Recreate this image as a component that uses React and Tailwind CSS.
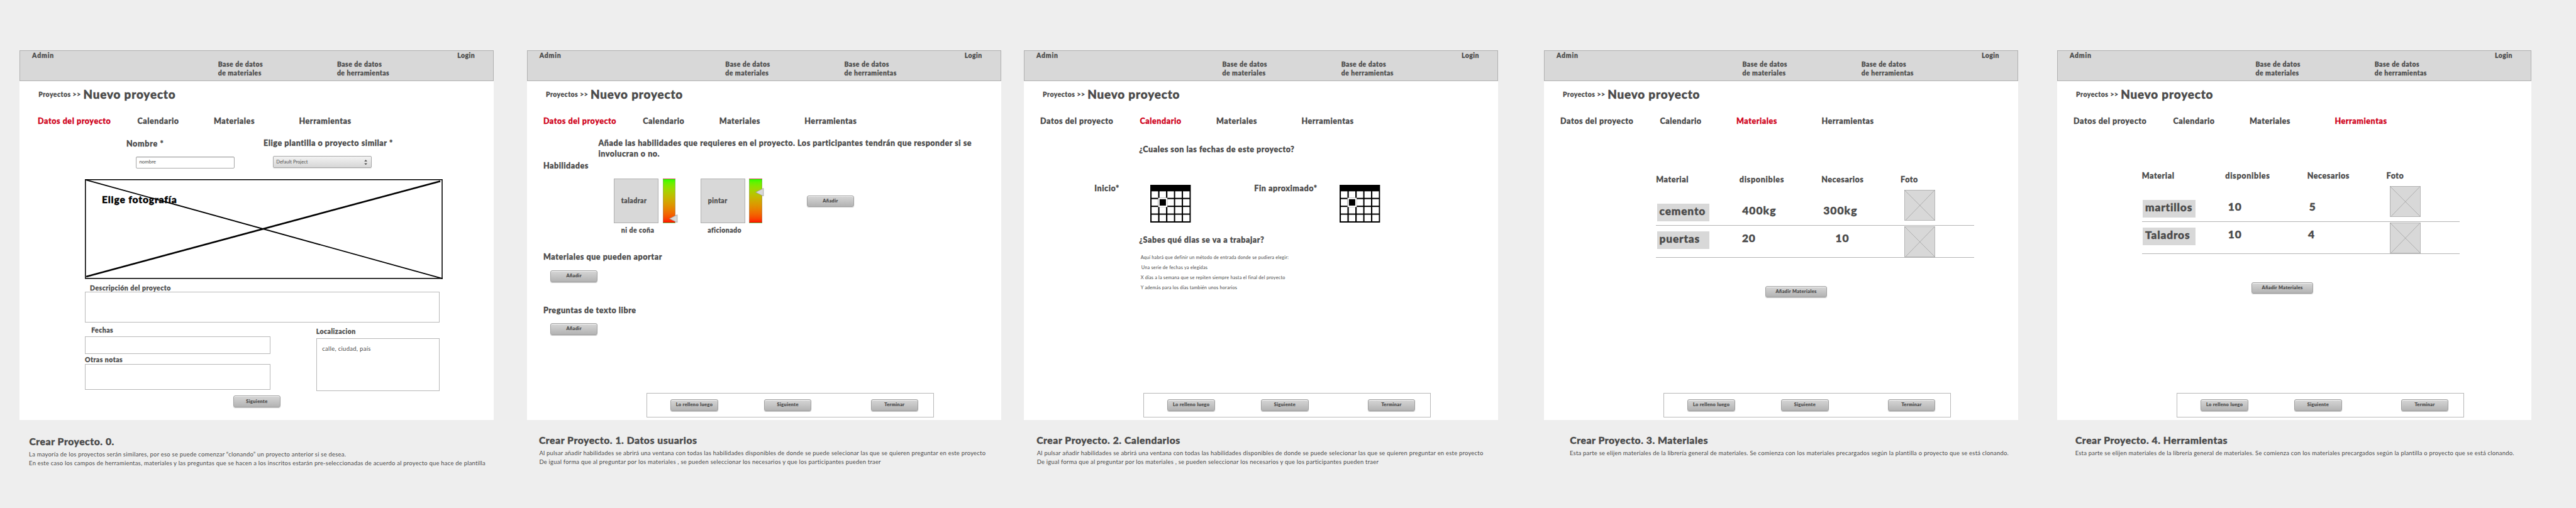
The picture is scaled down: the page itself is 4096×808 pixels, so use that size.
import React from "react";
import clsx from "clsx";

const heavy = "font-black [-webkit-text-stroke:0.026em_currentColor]";
const small = clsx(heavy, "text-[10.47px] leading-[14px] tracking-[0.048em]");
const medium = clsx(heavy, "text-[12.57px] leading-[16px] tracking-[0.044em]");
const big = clsx(heavy, "text-[17.3px] leading-[22px] tracking-[0.05em]");
const note = "text-[9.42px] tracking-[0.026em]";

function Button({ children, className = "w-[75.6px]" }) {
  return (
    <button
      className={clsx(
        heavy,
        "flex h-[18.8px] shrink-0 items-center justify-center rounded-[3px] border border-[#a0a0a0] bg-linear-to-b from-[#d6d6d6] to-[#b3b3b3] pb-px text-[7.33px] leading-none tracking-[0.056em] shadow-[0_1px_1px_rgba(0,0,0,0.22),inset_0_1px_0_rgba(255,255,255,0.7)]",
        className,
      )}
    >
      {children}
    </button>
  );
}

function Header() {
  return (
    <header
      className={clsx(
        "grid h-[49px] shrink-0 grid-cols-[314.4px_189.2px_191.3px_auto] border border-[#b0b0b0] bg-[#d8d8d8]",
        small,
      )}
    >
      <span className="pt-[0.7px] pl-[18.8px] tracking-[0.08em]">Admin</span>
      <span className="pt-[14.3px]">
        Base de datos
        <br />
        de materiales
      </span>
      <span className="pt-[14.3px]">
        Base de datos
        <br />
        de herramientas
      </span>
      <span className="pt-[0.7px]">Login</span>
    </header>
  );
}

const TABS = ["Datos del proyecto", "Calendario", "Materiales", "Herramientas"];

function Tabs({ active, className }) {
  return (
    <nav className={clsx("grid shrink-0 grid-cols-[158.4px_121.5px_135.5px_auto]", medium, className)}>
      {TABS.map((tab, i) => (
        <span key={tab} className={i === active ? "text-[#d0021b]" : undefined}>
          {tab}
        </span>
      ))}
    </nav>
  );
}

function Artboard({ className, active, tabsClass = "pl-[26px]", footer = true, caption, children }) {
  return (
    <section className={clsx("flex w-[754px] shrink-0 flex-col", className)}>
      <div className="flex h-[588.6px] shrink-0 flex-col bg-white">
        <Header />
        <div className="flex h-[56.5px] shrink-0 items-start pl-[30px]">
          <span className={clsx("mt-[14.6px] w-[71.1px]", small)}>Proyectos &gt;&gt;</span>
          <h1 className={clsx("mt-[9.2px] text-[18.85px] leading-[24px] tracking-[0.046em]", heavy)}>Nuevo proyecto</h1>
        </div>
        <Tabs active={active} className={tabsClass} />
        {children}
        {footer && (
          <div className="mt-auto mb-[4.7px] ml-[190.3px] flex h-[38.6px] w-[456.6px] shrink-0 items-start border border-[#b8b8b8] pt-[8.8px] pl-[37px]">
            <Button>Lo relleno luego</Button>
            <Button className="ml-[73.1px] w-[75.6px]">Siguiente</Button>
            <Button className="ml-[94.1px] w-[75.6px]">Terminar</Button>
          </div>
        )}
      </div>
      {caption}
    </section>
  );
}

function Caption({ title, lines, className = "mt-[22.3px]", titleClass, textClass }) {
  return (
    <div className={className}>
      <h2 className={clsx("text-[15.7px] leading-[20px] tracking-[0.036em]", heavy, titleClass)}>{title}</h2>
      <div className={clsx("mt-[3.8px] leading-[13.7px]", note, textClass)}>
        {lines.map((line) => (
          <p key={line}>{line}</p>
        ))}
      </div>
    </div>
  );
}

function Box({ className, children }) {
  return <div className={clsx("shrink-0 border border-[#b8b8b8]", className)}>{children}</div>;
}

function ProjectForm() {
  return (
    <div className="flex flex-col">
      <div className="grid h-[84.4px] shrink-0 grid-cols-[218.1px_auto] pl-[169.6px]">
        <div className="pt-[19.6px]">
          <div className={clsx(medium, "tracking-[0.055em]")}>Nombre *</div>
          <div className="mt-[12.1px] ml-[14.9px] flex h-[18.8px] w-[157.3px] items-center rounded-[2px] border border-[#a8a8a8] pl-[4.6px] text-[7.9px] leading-none shadow-[inset_0_1px_1px_rgba(0,0,0,0.15)]">
            nombre
          </div>
        </div>
        <div className="pt-[19.2px]">
          <div className={medium}>Elige plantilla o proyecto similar *</div>
          <div className="mt-[12px] ml-[14.9px] flex h-[18.9px] w-[157.3px] items-center justify-between rounded-[2px] border border-[#a8a8a8] bg-linear-to-b from-[#f3f3f3] to-[#d6d6d6] pr-[6px] pl-[4.4px] text-[7.33px] leading-none tracking-[0.015em] shadow-[0_1px_1px_rgba(0,0,0,0.15)]">
            Default Project
            <svg viewBox="0 0 10 16" className="h-[8.4px] w-[5.2px]" fill="#4a4a4a">
              <path d="M5 0 L9.6 5.2 H0.4 Z M5 16 L9.6 10.8 H0.4 Z" />
            </svg>
          </div>
        </div>
      </div>
      <div className="relative ml-[103.7px] h-[158.6px] w-[568.8px] shrink-0 text-black">
        <svg viewBox="0 0 1086 303" preserveAspectRatio="none" className="absolute inset-0 h-full w-full" fill="none" stroke="#000">
          <rect x="1.5" y="1.5" width="1083" height="300" strokeWidth="3" />
          <path d="M3 2 L1086 302" strokeWidth="3.6" />
          <path d="M4 296 L1079 6" strokeWidth="5" />
        </svg>
        <div className={clsx("relative pt-[21.1px] pl-[27px] text-[15.7px] leading-[20px] tracking-[0.052em]", heavy)}>
          Elige fotografía
        </div>
      </div>
      <div className={clsx("mt-[6.6px] pl-[111.8px]", small)}>Descripción del proyecto</div>
      <Box className="-mt-[1.1px] ml-[103.7px] h-[49.5px] w-[563.6px]" />
      <div className="ml-[103.7px] flex items-start">
        <div className="flex w-[295.4px] flex-col">
          <span className={clsx("mt-[5.2px] pl-[10.2px]", small)}>Fechas</span>
          <Box className="mt-[2.4px] h-[28.3px]" />
          <span className={clsx("mt-[1.8px]", small)}>Otras notas</span>
          <Box className="h-[40.9px]" />
        </div>
        <div className="ml-[72.3px] flex w-[196px] flex-col">
          <span className={clsx("mt-[7.3px]", small)}>Localizacion</span>
          <Box className="mt-[3.4px] h-[84.2px] pt-[10.7px] pl-[8.6px]">
            <p className="text-[9.42px] leading-[12px] tracking-[0.035em]">calle, ciudad, país</p>
          </Box>
        </div>
      </div>
      <Button className="mt-[7.5px] ml-[339.6px] w-[75px]">Siguiente</Button>
    </div>
  );
}

function Skill({ name, level, markerClass, nameClass }) {
  return (
    <div className="w-[137.4px]">
      <div className="flex">
        <div
          className={clsx(
            "h-[70.7px] w-[71px] border border-[#b0b0b0] bg-[#d8d8d8] pt-[27px] tracking-[0.05em]",
            nameClass,
          )}
        >
          {name}
        </div>
        <div className="relative ml-[6.7px] w-[20.5px] border border-[#979797]/50 bg-linear-to-b from-[#14ff00] to-[#ff0000]">
          <svg viewBox="0 0 26 26" className={clsx("absolute h-[13.6px] w-[13.4px]", markerClass)}>
            <path d="M1 13 L25 1 V25 Z" fill="#d8d8d8" stroke="#979797" strokeWidth="1.4" />
          </svg>
        </div>
      </div>
      <p className="mt-[4.4px] pl-[11.6px]">{level}</p>
    </div>
  );
}

function UserData() {
  return (
    <div className="flex flex-col">
      <p className={clsx("mt-[18px] pl-[113.6px] text-[12.57px] leading-[17px] tracking-[0.042em]", heavy)}>
        Añade las habilidades que requieres en el proyecto. Los participantes tendrán que responder si se
        <br />
        involucran o no.
      </p>
      <div className={clsx("mt-[2.8px] pl-[26px]", medium)}>Habilidades</div>
      <div className={clsx("mt-[12.3px] flex pl-[138.3px]", small)}>
        <Skill name="taladrar" level="ni de coña" nameClass="pl-[10.6px]" markerClass="top-[55.5px] left-[9.3px]" />
        <Skill name="pintar" level="aficionado" nameClass="pl-[11.2px]" markerClass="top-[13.6px] left-[9px]" />
        <Button className="mt-[26.4px] ml-[31.7px] w-[75.6px]">Añadir</Button>
      </div>
      <div className={clsx("mt-[27.9px] pl-[26px]", medium)}>Materiales que pueden aportar</div>
      <Button className="mt-[12.7px] ml-[37px] w-[75.6px]">Añadir</Button>
      <div className={clsx("mt-[37.1px] pl-[26px]", medium)}>Preguntas de texto libre</div>
      <Button className="mt-[12px] ml-[37px] w-[75.6px]">Añadir</Button>
    </div>
  );
}

const COLS = [4, 28, 52, 75.7, 99.5];
const ROWS = [19.7, 43.5, 67.3, 91];

function CalendarIcon() {
  return (
    <svg viewBox="0 0 123 114.7" className="mt-[2.3px] h-[60px] w-[64.4px]">
      <rect width="123" height="114.7" fill="#000" />
      {ROWS.map((y) => COLS.map((x) => <rect key={x + "-" + y} x={x} y={y} width="19.8" height="19.8" fill="#fff" />))}
      <rect x="24" y="39.5" width="28" height="28" fill="#fff" />
      <rect x="28.2" y="43.7" width="19.4" height="19.4" fill="#000" />
    </svg>
  );
}

function Dates() {
  return (
    <div className="flex flex-col">
      <div className={clsx("mt-[28.8px] pl-[183.2px]", medium)}>¿Cuales son las fechas de este proyecto?</div>
      <div className={clsx("mt-[46.2px] grid grid-cols-[89.1px_164.9px_136.2px_auto] pl-[112.2px]", medium)}>
        <span>Inicio*</span>
        <CalendarIcon />
        <span>Fin aproximado*</span>
        <CalendarIcon />
      </div>
      <div className={clsx("mt-[19.4px] pl-[183.2px]", medium)}>¿Sabes qué dias se va a trabajar?</div>
      <div className="mt-[12.7px] pl-[185.6px] text-[7.33px] leading-[15.7px] tracking-[0.025em]">
        <p>Aquí habrá que definir un método de entrada donde se pudiera elegir:</p>
        <p className="pl-[1.2px]">Una serie de fechas ya elegidas</p>
        <p>X días a la semana que se repiten siempre hasta el final del proyecto</p>
        <p>Y además para los días también unos horarios</p>
      </div>
    </div>
  );
}

function Photo({ className }) {
  return (
    <svg viewBox="0 0 94 94" className={clsx("h-[49.2px] w-[49.2px]", className)} fill="none" stroke="#979797" strokeWidth="1.2">
      <rect x="0.6" y="0.6" width="92" height="92" fill="#d8d8d8" />
      <path d="M1 1 L94 94 M4 92 L92 1" />
    </svg>
  );
}

const ROW_GRID = "grid shrink-0 grid-cols-[132.5px_130.4px_125.9px_auto] items-start";

function Inventory({ className, rows, buttonClass }) {
  return (
    <div className={clsx("flex flex-col", className)}>
      <div className="flex w-[505.5px] flex-col">
        <div className={clsx(ROW_GRID, medium)}>
          <span>Material</span>
          <span className="tracking-[0.056em]">disponibles</span>
          <span>Necesarios</span>
          <span>Foto</span>
        </div>
        {rows.map((row, i) => (
          <div
            key={row.name}
            className={clsx(ROW_GRID, big, "border-b border-[#b4b4b4]", i === 0 ? "h-[64.7px] pt-[29.2px]" : "h-[50.5px] pt-[9.2px]")}
          >
            <span className="ml-[1.5px] h-[28px] w-[83.3px] bg-[#d8d8d8] pt-[1.1px] pl-[3.8px]">{row.name}</span>
            <span className={row.availableClass}>{row.available}</span>
            <span className={row.neededClass}>{row.needed}</span>
            <Photo className={i === 0 ? "-mt-[22px] ml-[5.6px]" : "-mt-[8.8px] ml-[5.6px]"} />
          </div>
        ))}
      </div>
      <Button className={clsx("mt-[44.9px] w-[97.5px]", buttonClass)}>Añadir Materiales</Button>
    </div>
  );
}

const MATERIALS = [
  { name: "cemento", available: "400kg", needed: "300kg", availableClass: "pl-[4.4px] tracking-[0.065em]", neededClass: "pt-[0.6px] pl-[3px] tracking-[0.065em]" },
  { name: "puertas", available: "20", needed: "10", availableClass: "pl-[4.2px]", neededClass: "pl-[22.4px]" },
];

const TOOLS = [
  { name: "martillos", available: "10", needed: "5", availableClass: "pl-[4.6px]", neededClass: "pt-[0.6px] pl-[3.2px]" },
  { name: "Taladros", available: "10", needed: "4", availableClass: "pl-[4.6px]", neededClass: "pl-[1.4px]" },
];

const USER_NOTES = [
  "Al pulsar añadir habilidades se abrirá una ventana con todas las habilidades disponibles de donde se puede selecionar las que se quieren preguntar en este proyecto",
  "De igual forma que al preguntar por los materiales , se pueden seleccionar los necesarios y que los participantes pueden traer",
];

const INVENTORY_NOTES = [
  "Esta parte se elijen materiales de la librería general de materiales. Se comienza con los materiales precargados según la plantilla o proyecto que se está clonando.",
];

export default function App() {
  return (
    <main className="flex h-[808px] w-[4096px] items-start overflow-hidden bg-[#eeeeee] pt-[79.6px] font-[Lato,sans-serif] whitespace-nowrap text-[#4a4a4a]">
      <Artboard
        className="ml-[31.3px]"
        active={0}
        tabsClass="pl-[28.8px]"
        footer={false}
        caption={
          <Caption
            className="mt-[23.9px]"
            titleClass="pl-[15.1px]"
            textClass="pl-[14.8px]"
            title="Crear Proyecto. 0."
            lines={[
              "La mayoría de los proyectos serán similares, por eso se puede comenzar “clonando” un proyecto anterior si se desea.",
              "En este caso los campos de herramientas, materiales y las preguntas que se hacen a los inscritos estarán pre-seleccionadas de acuerdo al proyecto que hace de plantilla",
            ]}
          />
        }
      >
        <ProjectForm />
      </Artboard>
      <Artboard
        className="ml-[52.6px]"
        active={0}
        caption={<Caption titleClass="pl-[19px]" textClass="pl-[19.5px]" title="Crear Proyecto. 1. Datos usuarios" lines={USER_NOTES} />}
      >
        <UserData />
      </Artboard>
      <Artboard
        className="ml-[36.2px]"
        active={1}
        caption={<Caption titleClass="pl-[20.1px]" textClass="pl-[20.6px]" title="Crear Proyecto. 2. Calendarios" lines={USER_NOTES} />}
      >
        <Dates />
      </Artboard>
      <Artboard
        className="ml-[73px]"
        active={2}
        caption={<Caption titleClass="pl-[41.2px]" textClass="pl-[40.9px]" title="Crear Proyecto. 3. Materiales" lines={INVENTORY_NOTES} />}
      >
        <Inventory rows={MATERIALS} className="pt-[77.4px] pl-[178.2px]" buttonClass="ml-[174.1px]" />
      </Artboard>
      <Artboard
        className="ml-[62px]"
        active={3}
        caption={<Caption titleClass="pl-[28.9px]" textClass="pl-[28.6px]" title="Crear Proyecto. 4. Herramientas" lines={INVENTORY_NOTES} />}
      >
        <Inventory rows={TOOLS} className="pt-[71.4px] pl-[134.7px]" buttonClass="ml-[174.7px]" />
      </Artboard>
    </main>
  );
}
